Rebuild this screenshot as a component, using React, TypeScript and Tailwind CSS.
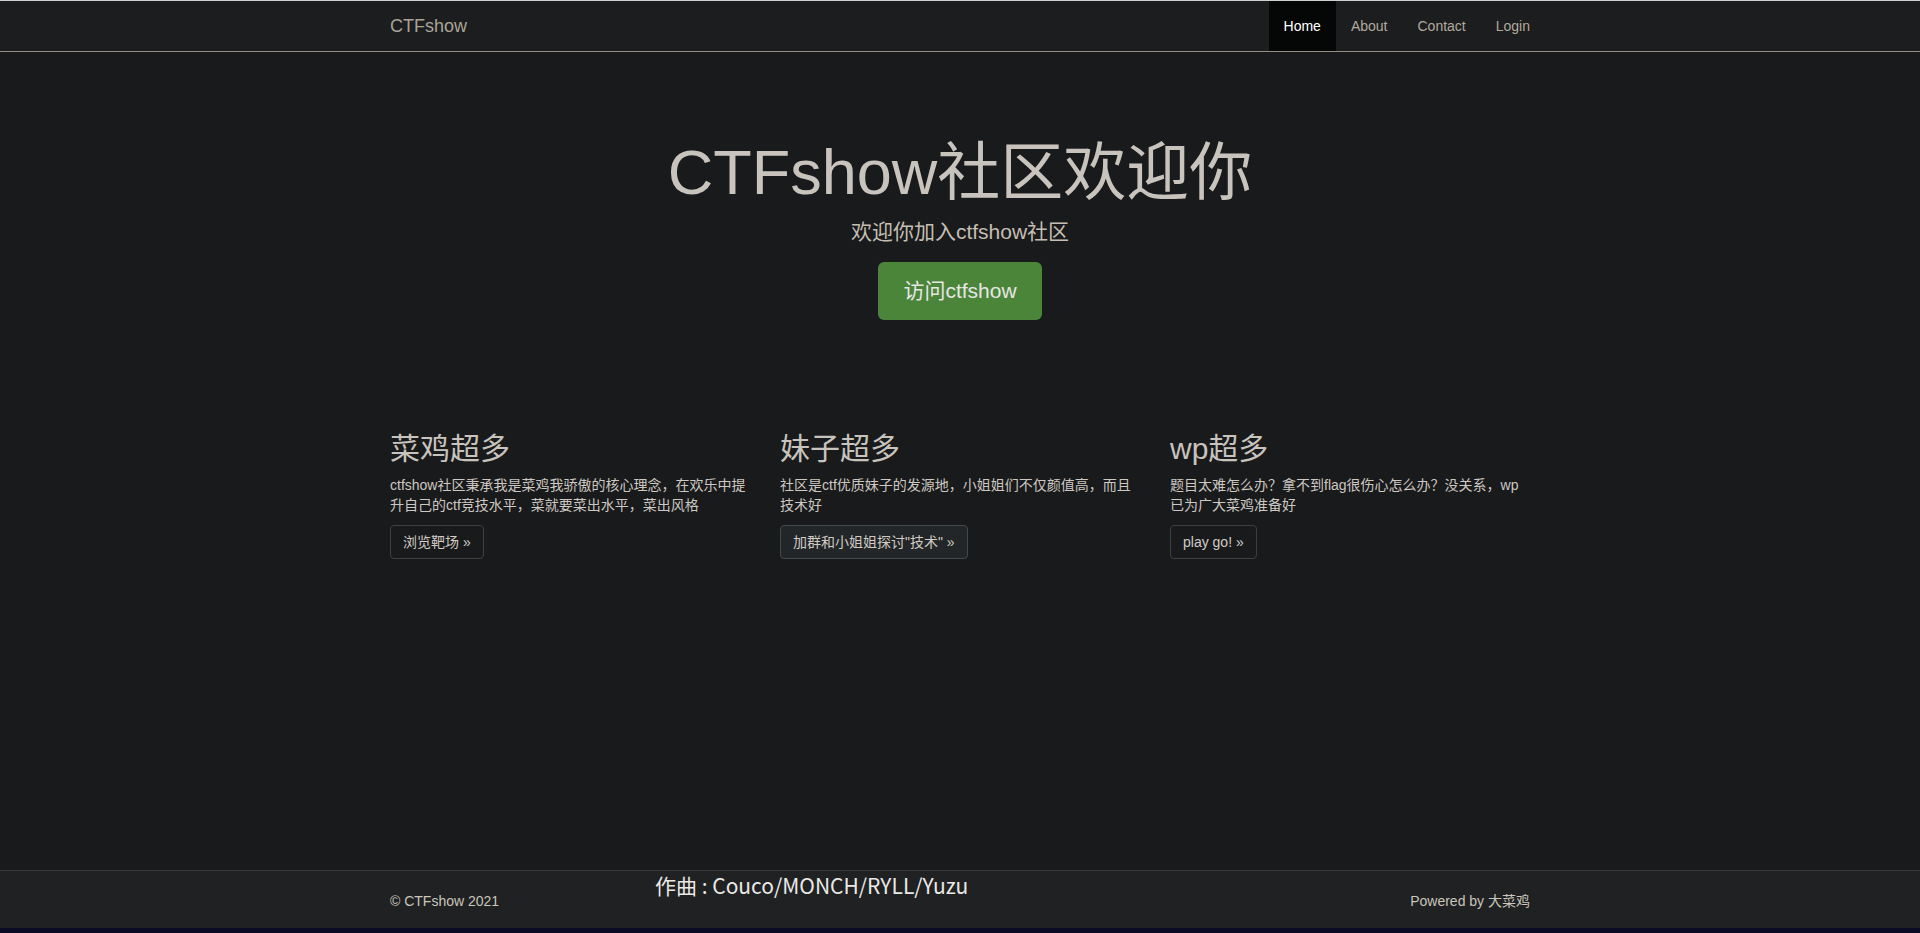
import React from "react";

const FONT = '"Liberation Sans", "Noto Sans CJK SC", sans-serif';

const cols = [
  {
    title: "菜鸡超多",
    text: "ctfshow社区秉承我是菜鸡我骄傲的核心理念，在欢乐中提升自己的ctf竞技水平，菜就要菜出水平，菜出风格",
    btn: "浏览靶场 »",
    active: false,
  },
  {
    title: "妹子超多",
    text: "社区是ctf优质妹子的发源地，小姐姐们不仅颜值高，而且技术好",
    btn: "加群和小姐姐探讨\"技术\" »",
    active: true,
  },
  {
    title: "wp超多",
    text: "题目太难怎么办？拿不到flag很伤心怎么办？没关系，wp已为广大菜鸡准备好",
    btn: "play go! »",
    active: false,
  },
];

export default function App() {
  return (
    <div
      className="relative flex min-h-screen flex-col bg-[#191a1c] text-[14px] leading-[20px] text-[#c8c3bc]"
      style={{ fontFamily: FONT }}
    >
      <div className="h-px bg-[#cfcfcf]" />
      <nav className="h-[51px] border-b border-[#948e80] bg-[#1c1d1f]">
        <div className="mx-auto flex h-[50px] w-[1170px] items-stretch justify-between px-[15px]">
          <a className="py-[15px] text-[18px] leading-[20px] text-[#aaa498]">CTFshow</a>
          <ul className="-mr-[15px] flex">
            <li className="bg-[#050606]">
              <a className="block px-[15px] py-[15px] text-white">Home</a>
            </li>
            <li>
              <a className="block px-[15px] py-[15px] text-[#b1aa9e]">About</a>
            </li>
            <li>
              <a className="block px-[15px] py-[15px] text-[#b1aa9e]">Contact</a>
            </li>
            <li>
              <a className="block px-[15px] py-[15px] text-[#b1aa9e]">Login</a>
            </li>
          </ul>
        </div>
      </nav>

      <main className="flex-1">
        <section className="pt-[86px] text-center">
          <h1 className="mb-[10px] text-[63px] leading-[69px] text-[#c8c3bc]">CTFshow社区欢迎你</h1>
          <p className="mb-[15px] text-[21px] leading-[30px] text-[#c5beb2]">欢迎你加入ctfshow社区</p>
          <div className="flex justify-center">
            <a className="flex h-[58px] w-[164px] items-center justify-center rounded-[6px] bg-[#4a853a] text-[21px] text-[#e8e6e3]">
              访问ctfshow
            </a>
          </div>
        </section>

        <section className="mx-auto mt-[112px] grid w-[1170px] grid-cols-3">
          {cols.map((c) => (
            <div key={c.title} className="px-[15px]">
              <h2 className="mb-[10px] text-[30px] leading-[33px] text-[#c8c3bc]">{c.title}</h2>
              <p className="mb-[10px] text-[14px] leading-[20px] text-[#cdc8c1]">{c.text}</p>
              <a
                className={`inline-flex h-[34px] items-center rounded-[4px] border px-[12px] text-[14px] text-[#d0cbc4] ${
                  c.active ? "border-[#44494c] bg-[#232628]" : "border-[#3c4043] bg-transparent"
                }`}
              >
                {c.btn}
              </a>
            </div>
          ))}
        </section>
      </main>

      <footer className="h-[58px] border-t border-[#36393b] bg-[#1f2123]">
        <div className="mx-auto flex w-[1170px] justify-between px-[15px] pt-[20px] text-[14px] leading-[20px] text-[#cbc5bb]">
          <span>© CTFshow 2021</span>
          <span>Powered by 大菜鸡</span>
        </div>
      </footer>
      <div className="h-[5px] bg-[#0c0b26]" />

      <div
        className="absolute left-[655px] top-[870px] text-[21px] leading-[30px] text-[#ebe9e6]"
        style={{ fontFamily: '"Noto Sans CJK SC", sans-serif' }}
      >
        作曲 : Couco/MONCH/RYLL/Yuzu
      </div>
    </div>
  );
}
